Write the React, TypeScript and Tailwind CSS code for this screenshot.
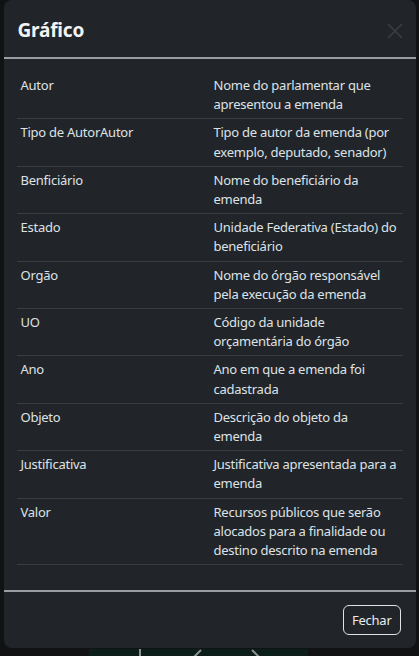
import { X } from 'lucide-react';

const rows = [
  { label: 'Autor', description: 'Nome do parlamentar que apresentou a emenda' },
  { label: 'Tipo de AutorAutor', description: 'Tipo de autor da emenda (por exemplo, deputado, senador)' },
  { label: 'Benficiário', description: 'Nome do beneficiário da emenda' },
  { label: 'Estado', description: 'Unidade Federativa (Estado) do beneficiário' },
  { label: 'Orgão', description: 'Nome do órgão responsável pela execução da emenda' },
  { label: 'UO', description: 'Código da unidade orçamentária do órgão' },
  { label: 'Ano', description: 'Ano em que a emenda foi cadastrada' },
  { label: 'Objeto', description: 'Descrição do objeto da emenda' },
  { label: 'Justificativa', description: 'Justificativa apresentada para a emenda' },
  { label: 'Valor', description: 'Recursos públicos que serão alocados para a finalidade ou destino descrito na emenda' }
];

export default function App() {
  return (
    <div
      className="h-[656px] w-[419px] overflow-hidden bg-[#111213] flex flex-col items-center"
      style={{ fontFamily: '"Noto Sans", "Open Sans", sans-serif' }}
    >
      {/* Modal */}
      <div className="w-[412px] bg-[#212529] rounded-lg flex flex-col shrink-0">
        {/* Header */}
        <div className="h-[59px] px-[14px] pt-[4px] flex items-center justify-between border-b-2 border-[#9a9da1]">
          <h5 className="text-[19px] font-bold tracking-[-0.2px] text-[#f3f3f3] leading-none">Gráfico</h5>
          <X className="w-[26px] h-[26px] text-[#3b3e42] -mr-[6px]" strokeWidth={1.5} />
        </div>

        {/* Body */}
        <div className="px-[13px] pt-[13px] pb-[25px]">
          <table className="w-full table-fixed border-collapse text-[13px] leading-[19.2px] tracking-[-0.25px] text-[#dee2e6]">
            <tbody>
              {rows.map((row, index) => (
                <tr key={index} className="border-b border-[#3a3e42]">
                  <td className="px-1 py-1 align-top">{row.label}</td>
                  <td className="px-1 py-1 align-top">{row.description}</td>
                </tr>
              ))}
            </tbody>
          </table>
        </div>

        {/* Footer */}
        <div className="h-[58px] px-[15px] flex items-center justify-end border-t-2 border-[#9a9da1]">
          <button className="h-[30px] px-[8px] rounded-md border border-[#dee2e6] text-[13px] tracking-[-0.25px] text-[#e9ecef] leading-none">
            Fechar
          </button>
        </div>
      </div>

      {/* Page content peeking below the modal */}
      <div className="w-[419px] h-[8px] mt-[1px] flex shrink-0">
        <div className="ml-[89px] w-[219px] h-full bg-[#0c1e19]">
          <svg width="219" height="8" viewBox="0 0 219 8">
            <line x1="51" y1="0" x2="51" y2="8" stroke="#8e9190" strokeWidth="2" />
            <line x1="112" y1="1" x2="105" y2="8" stroke="#8e9190" strokeWidth="2" />
            <line x1="163" y1="1" x2="170" y2="8" stroke="#8e9190" strokeWidth="2" />
          </svg>
        </div>
      </div>
    </div>
  );
}
